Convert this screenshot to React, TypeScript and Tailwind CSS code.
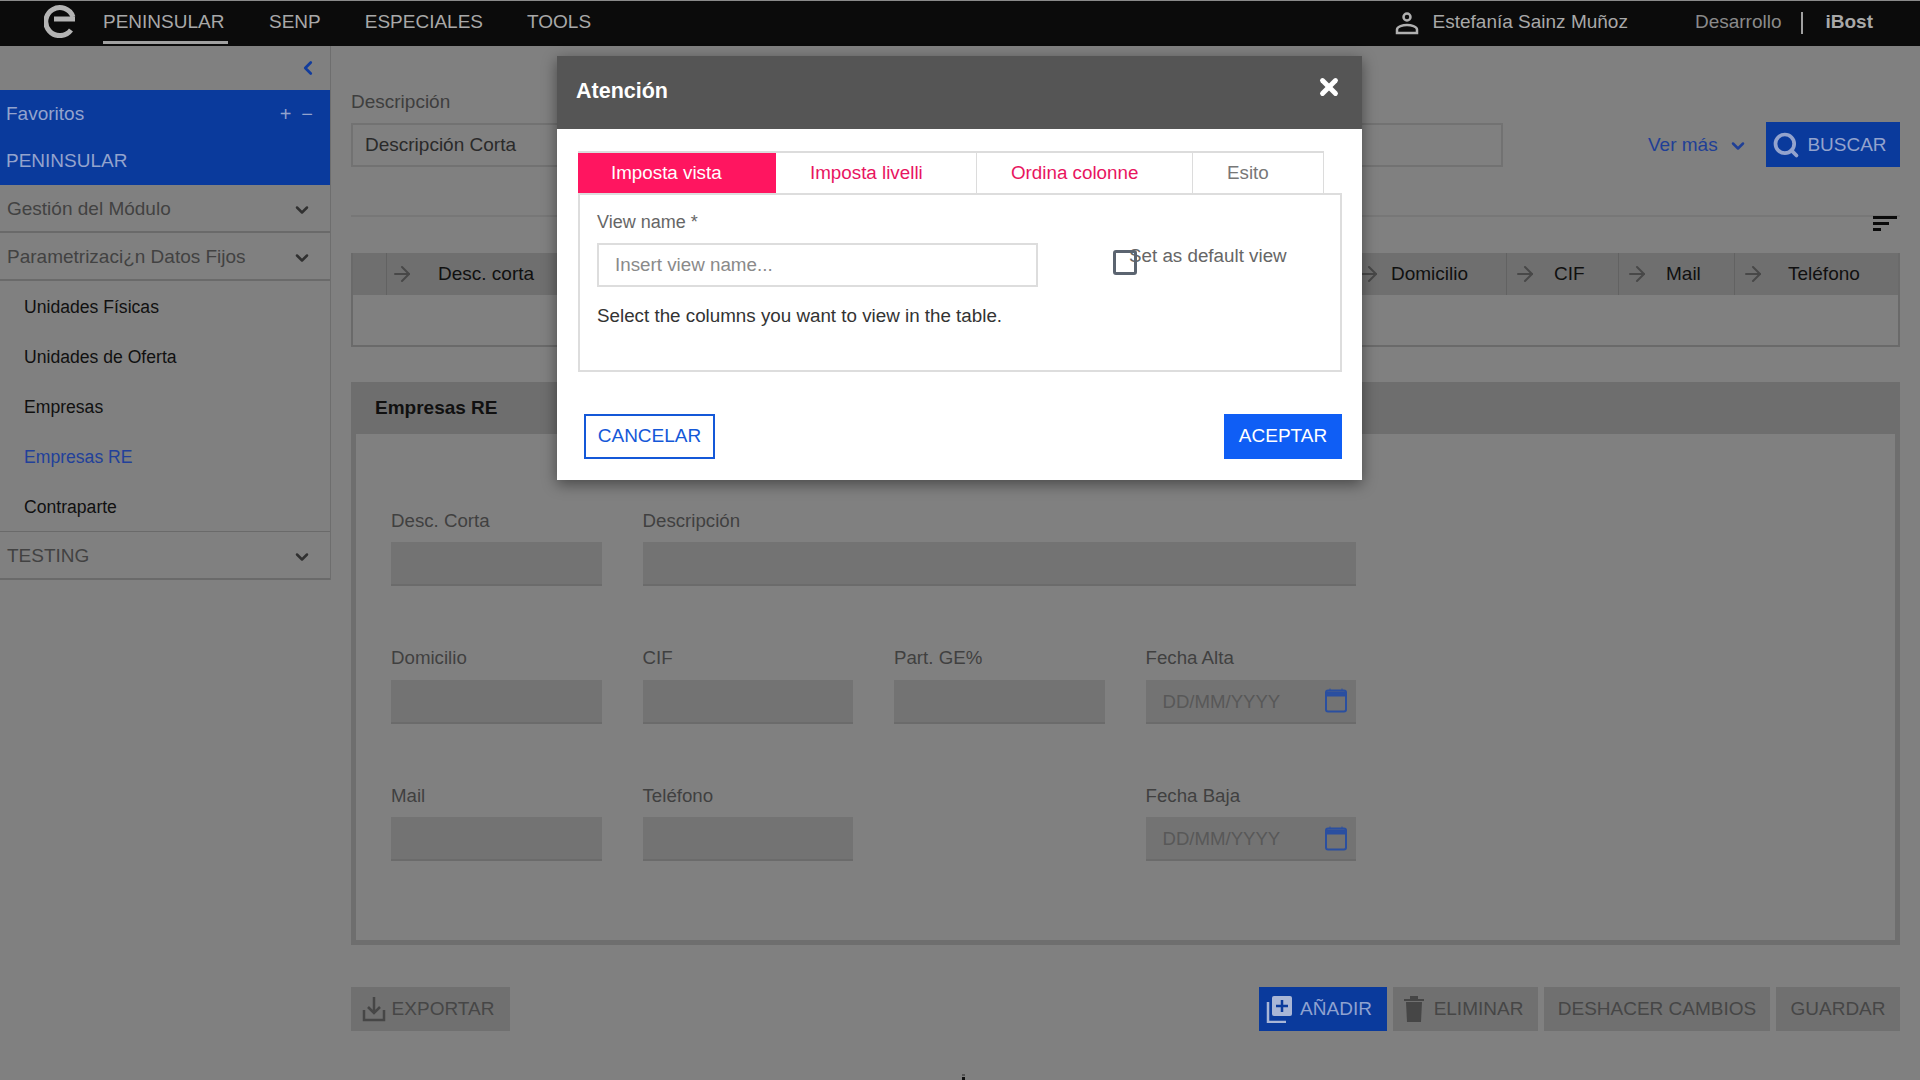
import { ArrowRight, ChevronDown, ChevronLeft, Search, X } from "lucide-react";
import type { ReactNode } from "react";

function Logo() {
  return (
    <svg viewBox="0 0 32 34" className="h-[34px] w-8 ml-11 -mt-[6px]">
      <path d="M27 26 A14 14 0 1 1 29 13" fill="none" stroke="#b4b4b4" strokeWidth="5" />
      <path d="M10 15 H31" stroke="#b4b4b4" strokeWidth="5" />
    </svg>
  );
}

function UserIcon() {
  return (
    <svg viewBox="0 0 24 24" className="w-6 h-6" fill="none" stroke="#b0b0b0" strokeWidth="2.5">
      <circle cx="12" cy="6" r="3.5" />
      <path d="M2 22 V18.5 C2 15.5 8 14 12 14 C16 14 22 15.5 22 18.5 V22 Z" />
    </svg>
  );
}

function CalendarIcon() {
  return (
    <svg viewBox="0 0 22 25" className="w-[22px] h-[25px]" fill="none">
      <rect x="1" y="2.5" width="20" height="21" rx="2" stroke="#2a4fa0" strokeWidth="2" />
      <path d="M1 4 H21 V8 H1 Z M5 0.5 V3 M17 0.5 V3" fill="#2a4fa0" stroke="#2a4fa0" />
    </svg>
  );
}

function SortIcon() {
  return (
    <div className="absolute right-[3px] top-[-1px] flex flex-col gap-[3px]">
      <div className="w-6 h-[3px] bg-[#0a0a0a]" />
      <div className="w-4 h-[3px] bg-[#0a0a0a]" />
      <div className="w-2 h-[3px] bg-[#0a0a0a]" />
    </div>
  );
}

function MenuRow({ label }: { label: string }) {
  return (
    <div className="h-12 shrink-0 flex items-center justify-between pt-[2px] pl-[7px] pr-[18px] border-b-2 border-[#6a6a6a] text-[#424242]">
      <span>{label}</span>
      <ChevronDown size={20} strokeWidth={3} className="text-[#303030] mt-[2px]" />
    </div>
  );
}

function Sidebar() {
  const items = ["Unidades Físicas", "Unidades de Oferta", "Empresas", "Empresas RE", "Contraparte"];
  return (
    <aside className="w-[331px] shrink-0 self-start border-r border-[#6e6e6e] flex flex-col">
      <div className="h-11 flex items-center justify-end pr-[11px]">
        <ChevronLeft size={22} strokeWidth={3} className="text-[#123c9c]" />
      </div>
      <div className="h-[95px] bg-[#0a3a9c] text-[#93a3cd] pl-[6px] pr-[17px] flex flex-col">
        <div className="h-12 flex items-center justify-between">
          <span>Favoritos</span>
          <div className="flex gap-[10px] text-xl leading-none">
            <span>+</span>
            <span>−</span>
          </div>
        </div>
        <div className="h-[47px] flex items-center">PENINSULAR</div>
      </div>
      <MenuRow label="Gestión del Módulo" />
      <MenuRow label="Parametrizaci¿n Datos Fijos" />
      <div className="border-b border-[#6a6a6a] text-[17.6px]">
        {items.map((item) => (
          <div
            key={item}
            className={`h-[50px] flex items-center pt-[2px] pl-6 ${item === "Empresas RE" ? "text-[#22409a]" : "text-[#101010]"}`}
          >
            {item}
          </div>
        ))}
      </div>
      <MenuRow label="TESTING" />
    </aside>
  );
}

function HeaderCell({ label, className }: { label: string; className: string }) {
  return (
    <div className={`h-full shrink-0 flex items-center border-l border-[#626262] ${className}`}>
      <ArrowRight size={24} strokeWidth={2} className="text-[#484848] shrink-0" />
      <span className="text-[#101010]">{label}</span>
    </div>
  );
}

function Field({ label, span, date }: { label?: string; span?: boolean; date?: boolean }) {
  if (!label) return <div />;
  return (
    <div className={`flex flex-col ${span ? "col-span-3" : ""}`}>
      <label className="h-[26px] flex items-center text-[#404040] text-[18.7px]">{label}</label>
      <div className="h-11 mt-[8px] bg-[#737373] border-b-2 border-[#6b6b6b] flex items-center justify-between pl-[17px] pr-[9px]">
        {date && (
          <>
            <span className="text-[#585858] text-[18.6px] pt-[2px]">DD/MM/YYYY</span>
            <CalendarIcon />
          </>
        )}
      </div>
    </div>
  );
}

function ToolButton({ children, blue, className = "" }: { children: ReactNode; blue?: boolean; className?: string }) {
  return (
    <button
      className={`h-11 flex items-center justify-center ${blue ? "bg-[#0a3a9c] text-[#8fa2d0]" : "bg-[#707070] text-[#464646]"} ${className}`}
    >
      {children}
    </button>
  );
}

function Modal() {
  const tabClass = "flex items-center pl-[34px]";
  return (
    <div className="absolute left-[557px] top-14 w-[805px] h-[424px] bg-white shadow-[0_4px_14px_rgba(0,0,0,0.45)] flex flex-col text-[18.8px]">
      <div className="h-[73px] shrink-0 bg-[#555555] flex items-center justify-between pl-[19px] pr-[19px]">
        <h2 className="text-[21.5px] font-bold text-white -mt-[2px]">Atención</h2>
        <X size={26} strokeWidth={4.5} className="text-white -mt-[12px] mr-[1px]" />
      </div>
      <div className="pl-[21px] pr-[20px] pt-[22px] flex flex-col flex-1">
        <div className="flex h-[42px] w-[746px] border-t-2 border-[#dcdcdc]">
          <div className="w-[198px] bg-[#ff1560] text-white flex items-center pl-[33px]">Imposta vista</div>
          <div className={`w-[201px] border-r border-[#dcdcdc] text-[#e8155f] ${tabClass}`}>Imposta livelli</div>
          <div className={`w-[216px] border-r border-[#dcdcdc] text-[#e8155f] ${tabClass}`}>Ordina colonne</div>
          <div className={`w-[131px] border-r border-[#dcdcdc] text-[#777777] ${tabClass}`}>Esito</div>
        </div>
        <div className="h-[179px] border-2 border-[#dddddd] pl-[17px] relative">
          <div className="flex">
            <div className="w-[441px]">
              <div className="h-[27px] mt-[13px] flex items-center text-[#666666] text-lg">View name *</div>
              <div className="h-11 mt-[8px] border-2 border-[#dddddd] flex items-center pl-4 text-[#8a8a8a]">Insert view name...</div>
            </div>
            <div className="relative ml-[75px] mt-[55px] w-6 h-[25px] rounded-[3px] border-[3px] border-[#5b6470]" />
            <span className="-ml-[8px] mt-[47px] h-6 text-[#666666]">Set as default view</span>
          </div>
          <p className="mt-[15px] text-[#333333]">Select the columns you want to view in the table.</p>
        </div>
        <div className="flex justify-between items-start mt-[42px] pl-[6px] text-[19px]">
          <button className="w-[131px] h-[45px] border-2 border-[#1458d8] text-[#1458d8]">CANCELAR</button>
          <button className="w-[118px] h-[45px] bg-[#0f5ef5] text-white">ACEPTAR</button>
        </div>
      </div>
    </div>
  );
}

export default function App() {
  return (
    <div className="relative w-[1920px] h-[1080px] overflow-hidden bg-[#808080] flex flex-col font-['Liberation_Sans',sans-serif] text-[19px]">
      <header className="h-[46px] shrink-0 bg-[#0b0b0b] border-t border-[#8a8a8a] flex items-center text-[#a8a8a8]">
        <Logo />
        <nav className="flex items-center gap-[45px] ml-[27px]">
          <a className="h-[38px] flex items-center border-b-[3px] border-[#a0a0a0] mt-[2px] pb-[2px] w-[125px] -mr-[4px]">PENINSULAR</a>
          <a className="-mt-[2px]">SENP</a>
          <a className="-mt-[2px] -ml-[1px]">ESPECIALES</a>
          <a className="-mt-[2px] -ml-[1px]">TOOLS</a>
        </nav>
        <div className="ml-auto flex items-center pr-[47px] -mt-[2px]">
          <UserIcon />
          <span className="ml-[14px]">Estefanía Sainz Muñoz</span>
          <span className="ml-[67px] text-[#8a8a8a]">Desarrollo</span>
          <div className="w-[2px] h-[22px] bg-[#a0a0a0] ml-[19px] mr-[23px]" />
          <span className="font-bold text-[#a8a8a8]">iBost</span>
        </div>
      </header>

      <div className="flex flex-1 min-h-0">
        <Sidebar />
        <main className="flex-1 min-w-0 pl-5 pr-5">
          <label className="block mt-[44px] h-6 leading-6 text-[#3e3e3e]">Descripción</label>
          <div className="mt-[8px] flex items-center">
            <div className="w-[1152px] h-11 border-2 border-[#727272] flex items-center pl-3 pt-[2px] text-[#2a2a2a]">Descripción Corta</div>
            <a className="ml-[145px] pt-[2px] text-[#1f3f96] flex items-center gap-[10px]">
              Ver más
              <ChevronDown size={20} strokeWidth={3} />
            </a>
            <button className="ml-auto w-[134px] h-[45px] bg-[#0a3a9c] text-[#93a3cd] flex items-center justify-center gap-[7px] pr-[7px]">
              <Search size={28} strokeWidth={3.2} />
              <span className="pt-[2px]">BUSCAR</span>
            </button>
          </div>

          <div className="relative mt-[48px] border-t-2 border-[#777777]">
            <SortIcon />
          </div>

          <div className="mt-[36px] h-[94px] border-2 border-t-0 border-[#6a6a6a]">
            <div className="h-[42px] bg-[#6f6f6f] flex items-center">
              <div className="w-[33px] shrink-0" />
              <HeaderCell label="Desc. corta" className="w-[300px] pl-[3px] [&>span]:ml-[24px]" />
              <div className="flex-1" />
              <HeaderCell label="Domicilio" className="w-[156px] pl-[6px] [&>span]:ml-[10px]" />
              <HeaderCell label="CIF" className="w-[112px] pl-[6px] [&>span]:ml-[17px]" />
              <HeaderCell label="Mail" className="w-[116px] pl-[6px] [&>span]:ml-[17px]" />
              <HeaderCell label="Teléfono" className="w-[164px] pl-[6px] [&>span]:ml-[23px]" />
            </div>
          </div>

          <section className="mt-[35px] h-[563px] border-[5px] border-t-0 border-[#6e6e6e]">
            <h3 className="h-[52px] -mx-[5px] bg-[#6e6e6e] flex items-center pl-6 font-bold text-[#101010]">Empresas RE</h3>
            <div className="grid grid-cols-4 gap-x-[41px] gap-y-[59.5px] pt-[74px] pl-[35px] w-[1000px]">
              <Field label="Desc. Corta" />
              <Field label="Descripción" span />
              <Field label="Domicilio" />
              <Field label="CIF" />
              <Field label="Part. GE%" />
              <Field label="Fecha Alta" date />
              <Field label="Mail" />
              <Field label="Teléfono" />
              <Field />
              <Field label="Fecha Baja" date />
            </div>
          </section>

          <div className="mt-[42px] flex items-center gap-[6px]">
            <ToolButton className="w-[159px] gap-[6px] pr-[5px]">
              <svg viewBox="0 0 24 26" className="w-6 h-[26px]" fill="none" stroke="#464646" strokeWidth="2.5">
                <path d="M12 1 V16 M6 11 L12 17 L18 11 M2 14 V24 H22 V14" />
              </svg>
              EXPORTAR
            </ToolButton>
            <div className="flex-1" />
            <ToolButton blue className="w-[128px] gap-[6px] pr-[8px]">
              <svg viewBox="0 0 28 28" className="w-7 h-7">
                <rect x="6" y="1" width="20" height="20" rx="2" fill="#a9b6d6" />
                <path d="M16 5 V17 M10 11 H22" stroke="#0a3a9c" strokeWidth="2.5" />
                <path d="M2 7 V27 H20" fill="none" stroke="#a9b6d6" strokeWidth="2.5" />
              </svg>
              AÑADIR
            </ToolButton>
            <ToolButton className="w-[145px] gap-[9px] pr-[5px]">
              <svg viewBox="0 0 22 28" className="w-[22px] h-7" fill="#464646">
                <path d="M1 4 H21 V6 H1 Z M7 1 H15 V4 H7 Z M3 7 H19 L18 27 H4 Z" />
              </svg>
              ELIMINAR
            </ToolButton>
            <ToolButton className="w-[226px]">DESHACER CAMBIOS</ToolButton>
            <ToolButton className="w-[124px]">GUARDAR</ToolButton>
          </div>
        </main>
      </div>

      <div className="absolute left-[962px] bottom-0 flex flex-col items-center gap-[1px]">
        <div className="w-[3px] h-[2px] bg-[#555555]" />
        <div className="w-[3px] h-[3px] bg-[#101010]" />
      </div>

      <Modal />
    </div>
  );
}
